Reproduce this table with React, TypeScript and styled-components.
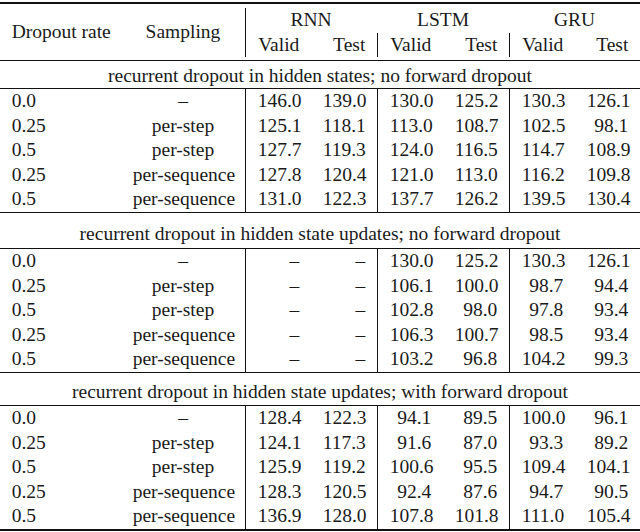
import React from "react";
import styled, { createGlobalStyle } from "styled-components";

const Global = createGlobalStyle`
  html, body { margin: 0; padding: 0; background: #ffffff; }
  body { font-family: "Liberation Serif", "Times New Roman", serif; color: #1a1a1a; }
`;

const Page = styled.div`
  padding-top: 2px;
  width: 640px;
`;

const Table = styled.table`
  width: 640px;
  table-layout: fixed;
  border-collapse: separate;
  border-spacing: 0;
  font-size: 19.5px;
`;

const SEP = "11.7px";

type Align = "left" | "center" | "right";

const HeadTop = styled.th<{ $align?: Align; $vline?: boolean }>`
  font-weight: normal;
  border-top: 2px solid #111;
  text-align: ${(p) => p.$align ?? "center"};
  vertical-align: bottom;
  line-height: 24px;
  padding: 4px ${SEP} 1px;
  white-space: nowrap;
  background: ${(p) =>
    p.$vline ? "linear-gradient(#111, #111) no-repeat left 0 top 4px / 1px calc(100% - 4px)" : "none"};
`;

const HeadSide = styled.th<{ $align: Align }>`
  font-weight: normal;
  border-top: 2px solid #111;
  border-bottom: 1px solid #111;
  text-align: ${(p) => p.$align};
  vertical-align: middle;
  line-height: 24px;
  padding: 0 ${SEP};
  white-space: nowrap;
`;

const HeadSub = styled.th<{ $vline?: boolean }>`
  font-weight: normal;
  border-bottom: 1px solid #111;
  text-align: right;
  vertical-align: top;
  line-height: 24px;
  padding: 0 ${SEP} 3px;
  white-space: nowrap;
  background: ${(p) =>
    p.$vline ? "linear-gradient(#111, #111) no-repeat left 0 top 0 / 1px calc(100% - 3px)" : "none"};
`;

const TitleCell = styled.td<{ $top: number; $bottom: number }>`
  text-align: center;
  line-height: 24px;
  padding: ${(p) => `${p.$top}px 0 ${p.$bottom}px`};
  border-bottom: 1px solid #111;
  white-space: nowrap;
`;

const Cell = styled.td<{ $align: Align; $vline?: boolean; $rule?: number }>`
  text-align: ${(p) => p.$align};
  line-height: 24.6px;
  padding: 0 ${SEP};
  white-space: nowrap;
  border-left: ${(p) => (p.$vline ? "1px solid #111" : "none")};
  border-bottom: ${(p) => (p.$rule ? `${p.$rule}px solid #111` : "none")};
`;

type Row = [string, string, string, string, string, string, string, string];

const sections: { title: string; top: number; bottom: number; rows: Row[] }[] = [
  {
    title: "recurrent dropout in hidden states; no forward dropout",
    top: 3,
    bottom: 0,
    rows: [
      ["0.0", "–", "146.0", "139.0", "130.0", "125.2", "130.3", "126.1"],
      ["0.25", "per-step", "125.1", "118.1", "113.0", "108.7", "102.5", "98.1"],
      ["0.5", "per-step", "127.7", "119.3", "124.0", "116.5", "114.7", "108.9"],
      ["0.25", "per-sequence", "127.8", "120.4", "121.0", "113.0", "116.2", "109.8"],
      ["0.5", "per-sequence", "131.0", "122.3", "137.7", "126.2", "139.5", "130.4"],
    ],
  },
  {
    title: "recurrent dropout in hidden state updates; no forward dropout",
    top: 9,
    bottom: 2,
    rows: [
      ["0.0", "–", "–", "–", "130.0", "125.2", "130.3", "126.1"],
      ["0.25", "per-step", "–", "–", "106.1", "100.0", "98.7", "94.4"],
      ["0.5", "per-step", "–", "–", "102.8", "98.0", "97.8", "93.4"],
      ["0.25", "per-sequence", "–", "–", "106.3", "100.7", "98.5", "93.4"],
      ["0.5", "per-sequence", "–", "–", "103.2", "96.8", "104.2", "99.3"],
    ],
  },
  {
    title: "recurrent dropout in hidden state updates; with forward dropout",
    top: 7,
    bottom: 1,
    rows: [
      ["0.0", "–", "128.4", "122.3", "94.1", "89.5", "100.0", "96.1"],
      ["0.25", "per-step", "124.1", "117.3", "91.6", "87.0", "93.3", "89.2"],
      ["0.5", "per-step", "125.9", "119.2", "100.6", "95.5", "109.4", "104.1"],
      ["0.25", "per-sequence", "128.3", "120.5", "92.4", "87.6", "94.7", "90.5"],
      ["0.5", "per-sequence", "136.9", "128.0", "107.8", "101.8", "111.0", "105.4"],
    ],
  },
];

const widths = [121, 124, 66, 66, 66, 66, 66, 65];
const models = ["RNN", "LSTM", "GRU"];

export default function App() {
  return (
    <Page>
      <Global />
      <Table>
        <colgroup>
          {widths.map((w, i) => (
            <col key={i} style={{ width: w }} />
          ))}
        </colgroup>
        <thead>
          <tr>
            <HeadSide rowSpan={2} $align="left">Dropout rate</HeadSide>
            <HeadSide rowSpan={2} $align="center">Sampling</HeadSide>
            {models.map((m, i) => (
              <HeadTop key={m} colSpan={2} $vline={i === 0}>
                {m}
              </HeadTop>
            ))}
          </tr>
          <tr>
            {models.map((m) => (
              <React.Fragment key={m}>
                <HeadSub $vline>Valid</HeadSub>
                <HeadSub>Test</HeadSub>
              </React.Fragment>
            ))}
          </tr>
        </thead>
        {sections.map((s, si) => (
          <tbody key={si}>
            <tr>
              <TitleCell colSpan={8} $top={s.top} $bottom={s.bottom}>
                {s.title}
              </TitleCell>
            </tr>
            {s.rows.map((r, ri) => {
              const rule = ri === s.rows.length - 1 ? (si === sections.length - 1 ? 2 : 1) : 0;
              return (
                <tr key={ri}>
                  {r.map((v, ci) => (
                    <Cell
                      key={ci}
                      $align={ci === 0 ? "left" : ci === 1 ? "center" : "right"}
                      $vline={ci === 2 || ci === 4 || ci === 6}
                      $rule={rule}
                    >
                      {v}
                    </Cell>
                  ))}
                </tr>
              );
            })}
          </tbody>
        ))}
      </Table>
    </Page>
  );
}
